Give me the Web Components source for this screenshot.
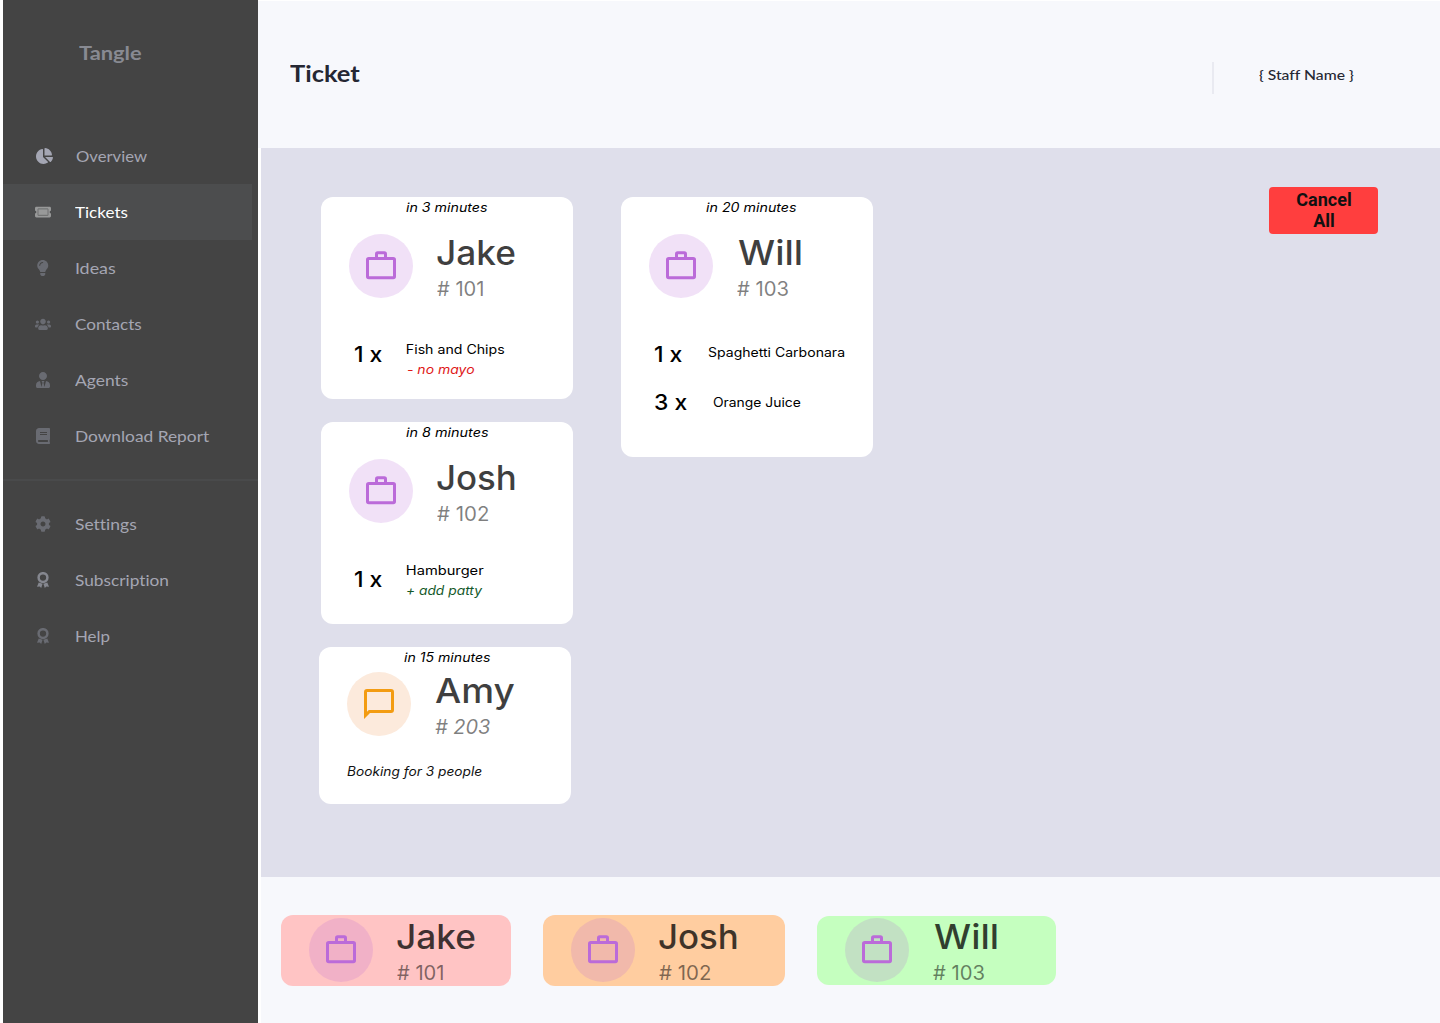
<!DOCTYPE html>
<html lang="en">
<head>
<meta charset="utf-8">
<title>Tangle – Ticket</title>
<style>
html, body { margin: 0; height: 100%; background: #fff; }
body { overflow: hidden; }
</style>
</head>
<body>
<tangle-app></tangle-app>
<script>
const canvas = document.createElement('canvas').getContext('2d');

class BaseElement extends HTMLElement {
  connectedCallback() {
    if (this.shadowRoot) return;
    this.attachShadow({ mode: 'open' }).innerHTML = this.render();
    this.ready();
  }
  ready() {}
  a(name, fallback = '') { return this.getAttribute(name) ?? fallback; }
}

/* Single line of text whose ink spans exactly the width `w`. */
class FitLabel extends BaseElement {
  render() {
    return `<style>
      :host { display: block; flex: none; width: ${this.a('w')}px; white-space: nowrap; }
      span { display: inline-block; transform-origin: 0 50%; vertical-align: top;
        font-variant-ligatures: none; }
    </style><span>${this.a('text')}</span>`;
  }
  ready() {
    const span = this.shadowRoot.querySelector('span');
    const s = getComputedStyle(span);
    canvas.font = `${s.fontStyle} ${s.fontWeight} ${s.fontSize} ${s.fontFamily}`;
    const text = this.a('text');
    const m = canvas.measureText(text);
    const left = m.actualBoundingBoxLeft;
    const rightGap = m.width - m.actualBoundingBoxRight;
    const ink = span.offsetWidth ? span.getBoundingClientRect().width + left - rightGap : left + m.actualBoundingBoxRight;
    const k = this.a('w') / ink;
    span.style.transform = `translateX(${left * k}px) scaleX(${k})`;
  }
}
customElements.define('fit-label', FitLabel);

const ICONS = {
  pie: ['0 0 544 512', 17, 16, '<path d="M527.79 288H290.5l158.03 158.03c6.04 6.04 15.98 6.53 22.19.68 38.7-36.46 65.32-85.61 73.13-140.86 1.34-9.46-6.51-17.85-16.06-17.85zm-15.83-64.8C503.72 103.74 408.26 8.28 288.8.04 279.68-.59 272 7.1 272 16.24V240h223.77c9.14 0 16.82-7.68 16.19-16.8zM224 288V50.71c0-9.55-8.39-17.4-17.84-16.06C86.99 51.49-4.1 155.6.14 280.37 4.5 408.51 114.83 513.59 243.03 511.98c50.4-.63 96.97-16.87 135.26-44.03 7.9-5.6 8.42-17.23 1.57-24.08L224 288z"/>'],
  ticket: ['0 0 576 512', 16, 14.2, '<path d="M96 128h384v256H96z" opacity=".55"/><path d="M128 160h320v192H128V160zm400 96c0 26.51 21.49 48 48 48v96c0 26.51-21.49 48-48 48H48c-26.51 0-48-21.49-48-48v-96c26.51 0 48-21.49 48-48s-21.49-48-48-48v-96c0-26.51 21.49-48 48-48h480c26.51 0 48 21.49 48 48v96c-26.51 0-48 21.49-48 48zm-48-104c0-13.255-10.745-24-24-24H120c-13.255 0-24 10.745-24 24v208c0 13.255 10.745 24 24 24h336c13.255 0 24-10.745 24-24V152z"/>'],
  bulb: ['0 0 352 512', 11.5, 16, '<path d="M96.06 454.35c.01 6.29 1.87 12.45 5.36 17.69l17.09 25.69a31.99 31.99 0 0 0 26.64 14.28h61.71a31.99 31.99 0 0 0 26.64-14.28l17.09-25.69a31.989 31.989 0 0 0 5.36-17.69l.04-38.35H96.01l.05 38.35zM0 176c0 44.37 16.45 84.85 43.56 115.78 16.52 18.85 42.36 58.23 52.21 91.45.04.26.07.52.11.78h160.24c.04-.26.07-.51.11-.78 9.85-33.22 35.69-72.6 52.21-91.45C335.55 260.85 352 220.37 352 176 352 78.61 272.91-.3 175.45 0 73.44.31 0 82.97 0 176zm176-80c-44.11 0-80 35.89-80 80 0 8.84-7.16 16-16 16s-16-7.16-16-16c0-61.76 50.24-112 112-112 8.84 0 16 7.16 16 16s-7.16 16-16 16z"/>'],
  users: ['0 0 640 512', 16, 12.8, '<path d="M96 224c35.3 0 64-28.7 64-64s-28.7-64-64-64-64 28.7-64 64 28.7 64 64 64zm448 0c35.3 0 64-28.7 64-64s-28.7-64-64-64-64 28.7-64 64 28.7 64 64 64zm32 32h-64c-17.6 0-33.5 7.1-45.1 18.6 40.3 22.1 68.9 62 75.1 109.4h66c17.7 0 32-14.3 32-32v-32c0-35.3-28.7-64-64-64zm-256 0c61.9 0 112-50.1 112-112S381.9 32 320 32 208 82.1 208 144s50.1 112 112 112zm76.8 32h-8.3c-20.8 10-43.9 16-68.5 16s-47.6-6-68.5-16h-8.3C179.6 288 128 339.6 128 403.2V432c0 26.5 21.5 48 48 48h288c26.5 0 48-21.5 48-48v-28.8c0-63.6-51.6-115.2-115.2-115.2zm-223.7-13.4C161.5 263.1 145.6 256 128 256H64c-35.3 0-64 28.7-64 64v32c0 17.7 14.3 32 32 32h65.9c6.3-47.4 34.9-87.3 75.2-109.4z"/>'],
  agent: ['0 0 448 512', 14, 16, '<path d="M224 256c70.7 0 128-57.3 128-128S294.7 0 224 0 96 57.3 96 128s57.3 128 128 128zm95.8 32.6L272 480l-32-136 32-56h-96l32 56-32 136-47.8-191.4C56.9 292 0 350.3 0 422.4V464c0 26.5 21.5 48 48 48h352c26.5 0 48-21.5 48-48v-41.6c0-72.1-56.9-130.4-128.2-133.8z"/>'],
  book: ['0 0 448 512', 14, 16, '<path d="M448 360V24c0-13.3-10.7-24-24-24H96C43 0 0 43 0 96v320c0 53 43 96 96 96h328c13.3 0 24-10.7 24-24v-16c0-7.5-3.5-14.3-8.9-18.7-4.2-15.4-4.2-59.3 0-74.7 5.4-4.3 8.9-11.1 8.9-18.6zM128 134c0-3.3 2.7-6 6-6h212c3.3 0 6 2.7 6 6v20c0 3.3-2.7 6-6 6H134c-3.3 0-6-2.7-6-6v-20zm0 64c0-3.3 2.7-6 6-6h212c3.3 0 6 2.7 6 6v20c0 3.3-2.7 6-6 6H134c-3.3 0-6-2.7-6-6v-20zm253.4 250H96c-17.7 0-32-14.3-32-32 0-17.6 14.4-32 32-32h285.4c-1.9 17.1-1.9 46.9 0 64z"/>'],
  cog: ['0 0 512 512', 16, 16, '<path d="M487.4 315.7l-42.6-24.6c4.3-23.2 4.3-47 0-70.2l42.6-24.6c4.9-2.8 7.1-8.6 5.5-14-11.1-35.6-30-67.8-54.7-94.6-3.8-4.1-10-5.1-14.8-2.3L380.8 110c-17.9-15.4-38.5-27.3-60.8-35.1V25.8c0-5.6-3.9-10.5-9.4-11.7-36.7-8.2-74.3-7.8-109.2 0-5.5 1.2-9.4 6.1-9.4 11.7V75c-22.2 7.9-42.8 19.8-60.8 35.1L88.7 85.5c-4.9-2.8-11-1.9-14.8 2.3-24.7 26.7-43.6 58.9-54.7 94.6-1.7 5.4.6 11.2 5.5 14L67.3 221c-4.3 23.2-4.3 47 0 70.2l-42.6 24.6c-4.9 2.8-7.1 8.6-5.5 14 11.1 35.6 30 67.8 54.7 94.6 3.8 4.1 10 5.1 14.8 2.3l42.6-24.6c17.9 15.4 38.5 27.3 60.8 35.1v49.2c0 5.6 3.9 10.5 9.4 11.7 36.7 8.2 74.3 7.8 109.2 0 5.5-1.2 9.4-6.1 9.4-11.7v-49.2c22.2-7.9 42.8-19.8 60.8-35.1l42.6 24.6c4.9 2.8 11 1.9 14.8-2.3 24.7-26.7 43.6-58.9 54.7-94.6 1.5-5.5-.7-11.3-5.6-14.1zM256 336c-44.1 0-80-35.9-80-80s35.9-80 80-80 80 35.9 80 80-35.9 80-80 80z"/>'],
  award: ['0 0 12 16', 12, 16, '<circle cx="6" cy="5.6" r="4.4" fill="none" stroke="currentColor" stroke-width="2.5"/><path d="M1.7 10.4 5.6 11.8l-1.4 4.2-1.5-1.4-2.7.1zM10.3 10.4 6.4 11.8l1.4 4.2 1.5-1.4 2.7.1z"/>'],
  work: ['0 0 32 32', 32, 32, '<g fill="none" stroke="currentColor" stroke-width="3"><rect x="2.5" y="8.5" width="27" height="19.3" rx="1.3"/><path d="M11.5 8V4q0-1.2 1.2-1.2h6.6q1.2 0 1.2 1.2V8"/></g>'],
  chat: ['0 0 32 32', 32, 32, '<path fill-rule="evenodd" d="M4 1h24a3 3 0 0 1 3 3v18a3 3 0 0 1-3 3H7l-6 6V4a3 3 0 0 1 3-3zM4 4v19.8L5.8 22H28V4z"/>']
};

class UiIcon extends BaseElement {
  render() {
    const [box, w, h, body] = ICONS[this.a('name')];
    return `<style>:host{display:block;flex:none}svg{display:block}</style>
      <svg width="${w}" height="${h}" viewBox="${box}" fill="currentColor">${body}</svg>`;
  }
}
customElements.define('ui-icon', UiIcon);

class NavItem extends BaseElement {
  render() {
    const active = this.hasAttribute('active');
    return `<style>
      :host { display: flex; align-items: center; height: 56px; width: 249px;
        background: ${active ? '#4c4d4e' : 'transparent'}; color: ${active ? '#fff' : '#a4a6b3'};
        font: 400 16px/56px Lato, sans-serif; }
      .i { display: flex; justify-content: center; width: 20px; margin-left: ${this.a('ix', '30')}px;
        color: ${this.a('ic', '#696b72')}; }
      fit-label { margin-left: ${this.a('gap', '22')}px; }
    </style><div class="i"><ui-icon name="${this.a('icon')}"></ui-icon></div>
    <fit-label text="${this.a('label')}" w="${this.a('w')}"></fit-label>`;
  }
}
customElements.define('nav-item', NavItem);

class SideBar extends BaseElement {
  render() {
    return `<style>
      :host { display: flex; flex-direction: column; flex: none; width: 255px; background: #444; margin-left: 3px; }
      .brand { height: 128px; box-sizing: border-box; padding: 37px 0 0 76px; color: #888a92;
        font: 700 19px/32px Lato, sans-serif; }
      hr { margin: 15px 0; border: 0; height: 2px; background: #494a4b; width: 100%; }
    </style>
    <div class="brand"><fit-label text="Tangle" w="62.5"></fit-label></div>
    <nav-item icon="pie" label="Overview" w="71.5" ix="31" gap="21.8" ic="#a4a6b3"></nav-item>
    <nav-item icon="ticket" label="Tickets" w="53" gap="22" ic="#989999" active></nav-item>
    <nav-item icon="bulb" label="Ideas" w="39.8" gap="22.5"></nav-item>
    <nav-item icon="users" label="Contacts" w="66.8"></nav-item>
    <nav-item icon="agent" label="Agents" w="53.5"></nav-item>
    <nav-item icon="book" label="Download Report" w="133.5" gap="22.7"></nav-item>
    <hr>
    <nav-item icon="cog" label="Settings" w="61.8"></nav-item>
    <nav-item icon="award" label="Subscription" w="93" ic="#85878f"></nav-item>
    <nav-item icon="award" label="Help" w="34" gap="22.8"></nav-item>`;
  }
}
customElements.define('side-bar', SideBar);

/* Round avatar with the customer's name and ticket number beside it. */
class TicketHead extends BaseElement {
  render() {
    const chat = this.a('icon', 'work') === 'chat';
    return `<style>
      :host { display: flex; align-items: flex-start; padding-left: 28px; font-family: Inter, sans-serif; }
      .avatar { display: flex; align-items: center; justify-content: center; flex: none; width: 64px; height: 64px;
        border-radius: 50%; background: ${chat ? '#fceadc' : 'rgba(187,107,217,.2)'}; color: ${chat ? '#f39c12' : '#bb6bd9'}; }
      .who { margin: -2.3px 0 0 24px; }
      .name { font-size: 33.7px; line-height: 42px; font-weight: 450; color: rgba(0,0,0,.75);
        margin-left: ${this.a('nx', '0')}px; }
      .num { font-size: 19.4px; line-height: 30px; color: rgba(0,0,0,.5); font-style: ${chat ? 'italic' : 'normal'}; }
    </style>
    <div class="avatar"><ui-icon name="${chat ? 'chat' : 'work'}"></ui-icon></div>
    <div class="who">
      <fit-label class="name" text="${this.a('name')}" w="${this.a('nw')}"></fit-label>
      <fit-label class="num" text="${this.a('num')}" w="${this.a('numw')}"></fit-label>
    </div>`;
  }
}
customElements.define('ticket-head', TicketHead);

class TicketCard extends BaseElement {
  render() {
    return `<style>
      :host { display: flex; flex-direction: column; width: 252px; font-family: Inter, sans-serif; }
      .top, .items { background: #fff; border-radius: 12px; box-sizing: border-box; }
      .top { height: ${this.a('top', '142')}px; }
      .time { margin: 0 0 ${this.a('space', '16')}px 85px; font-size: 12.5px; line-height: 21px;
        font-style: italic; font-weight: 450; color: #000; }
      .items { height: ${this.a('rest', '84')}px; margin-top: -24px; }
    </style>
    <div class="top">
      <fit-label class="time" text="${this.a('time')}" w="${this.a('tw')}"></fit-label>
      <slot name="head"></slot>
      <slot name="note"></slot>
    </div>
    ${this.a('rest') === '0' ? '' : '<div class="items"><slot></slot></div>'}`;
  }
}
customElements.define('ticket-card', TicketCard);

class OrderLine extends BaseElement {
  render() {
    return `<style>
      :host { display: flex; align-items: flex-start; height: ${this.a('h', '48')}px; padding-left: 33.9px; color: #000; }
      .box { width: ${this.a('gap', '52')}px; flex: none; }
      .qty { font-size: 21.8px; line-height: 30px; font-weight: 450; }
      .text { margin-top: ${this.a('dy', '0')}px; }
      .dish { font-size: 12.5px; line-height: 20px; font-weight: 400; }
      .extra { font-size: 12.5px; line-height: 20px; font-style: italic; color: ${this.a('color')}; }
    </style>
    <div class="box"><fit-label class="qty" text="${this.a('qty')}" w="${this.a('qw', '27.3')}"></fit-label></div>
    <div class="text">
      <fit-label class="dish" text="${this.a('dish')}" w="${this.a('w')}"></fit-label>
      ${this.hasAttribute('extra') ? `<fit-label class="extra" text="${this.a('extra')}" w="${this.a('ew')}"></fit-label>` : ''}
    </div>`;
  }
}
customElements.define('order-line', OrderLine);

class QueueChip extends BaseElement {
  render() {
    return `<style>
      :host { display: block; box-sizing: border-box; flex: none; border-radius: 12px;
        width: ${this.a('w')}px; height: ${this.a('h', '71')}px; padding-top: ${this.a('pt', '3.4')}px;
        background: ${this.a('bg')}; }
    </style><slot></slot>`;
  }
}
customElements.define('queue-chip', QueueChip);

class PageHeader extends BaseElement {
  render() {
    return `<style>
      :host { display: flex; align-items: flex-start; box-sizing: border-box; height: 147px; margin-top: 1px;
        padding-left: 32px; background: #f7f8fc; color: #252733; font-family: Lato, sans-serif; }
      .title { margin-top: 57px; font-size: 23.7px; line-height: 30px; font-weight: 700; }
      .rule { width: 2px; height: 32px; margin: 61px 0 0 852px; background: #e9eaf1; }
      .staff { margin: 63.5px 0 0 45px; font-size: 13.8px; line-height: 20px; font-weight: 500; }
    </style>
    <fit-label class="title" text="Ticket" w="70"></fit-label>
    <div class="rule"></div>
    <fit-label class="staff" text="{ Staff Name }" w="94.5"></fit-label>`;
  }
}
customElements.define('page-header', PageHeader);

class CancelButton extends BaseElement {
  render() {
    return `<style>
      :host { display: block; margin: 39px 62px 0 auto; }
      button { display: block; width: 109px; height: 47px; padding: 2px 19px 3px 20px; border: 0; border-radius: 4px;
        background: #ff3e3e; color: #111; font: 700 18px/21px Roboto, sans-serif; text-align: center; }
    </style><button><slot></slot></button>`;
  }
}
customElements.define('cancel-button', CancelButton);

class TangleApp extends BaseElement {
  render() {
    return `<style>
      :host { display: flex; width: 1440px; height: 1023px; overflow: hidden; }
      main { flex: 1; display: flex; flex-direction: column; min-width: 0; }
      .board { display: flex; align-items: flex-start; height: 729px; margin-left: 3px; background: #dfdfeb; }
      .col { display: flex; flex-direction: column; gap: 23px; margin: 49px 0 0 60px; width: 252px; }
      .col + .col { margin-left: 48px; }
      .amy { margin-left: -2px; }
      .note { margin: 20.5px 0 0 28px; font: italic 400 12.5px/20px Inter, sans-serif; color: #111; }
      .queue { display: flex; align-items: flex-start; gap: 32px; flex: 1; box-sizing: border-box;
        margin-left: 3px; padding: 38px 0 0 20px; background: #f7f8fc; }
      .will { margin-top: 1px; }
    </style>
    <side-bar></side-bar>
    <main>
      <page-header></page-header>
      <div class="board">
        <div class="col">
          <ticket-card time="in 3 minutes" tw="82">
            <ticket-head slot="head" name="Jake" nw="78" num="# 101" numw="46.5"></ticket-head>
            <order-line style="margin-top:24px" qty="1 x" dish="Fish and Chips" w="97" dy="0.5" extra="- no mayo" ew="67" color="#e01919"></order-line>
          </ticket-card>
          <ticket-card time="in 8 minutes" tw="83">
            <ticket-head slot="head" name="Josh" nw="77.5" num="# 102" numw="51.5"></ticket-head>
            <order-line style="margin-top:24px" qty="1 x" dish="Hamburger" w="77" dy="-3.5" extra="+ add patty" ew="76" color="#14592a"></order-line>
          </ticket-card>
          <ticket-card class="amy" time="in 15 minutes" tw="87" space="4" top="157" rest="0">
            <ticket-head slot="head" icon="chat" name="Amy" nw="79.5" num="# 203" numw="55.5"></ticket-head>
            <fit-label slot="note" class="note" text="Booking for 3 people" w="135"></fit-label>
          </ticket-card>
        </div>
        <div class="col">
          <ticket-card time="in 20 minutes" tw="91" rest="142">
            <ticket-head slot="head" name="Will" nx="0.5" nw="63.5" num="# 103" numw="51"></ticket-head>
            <order-line style="margin-top:24px" qty="1 x" gap="52.9" dish="Spaghetti Carbonara" w="137" dy="3.5"></order-line>
            <order-line qty="3 x" qw="32" gap="57.9" dish="Orange Juice" w="87.5" dy="5.5"></order-line>
          </ticket-card>
        </div>
        <cancel-button>Cancel<br>All</cancel-button>
      </div>
      <div class="queue">
        <queue-chip w="230" bg="#ffc4c4"><ticket-head name="Jake" nw="78" num="# 101" numw="46.5"></ticket-head></queue-chip>
        <queue-chip w="242" bg="#ffcda0"><ticket-head name="Josh" nw="77.5" num="# 102" numw="51.5"></ticket-head></queue-chip>
        <queue-chip class="will" w="239" h="69" pt="2.4" bg="#c5ffbf"><ticket-head name="Will" nx="0.5" nw="63.5" num="# 103" numw="51"></ticket-head></queue-chip>
      </div>
    </main>`;
  }
}
customElements.define('tangle-app', TangleApp);
</script>
</body>
</html>
